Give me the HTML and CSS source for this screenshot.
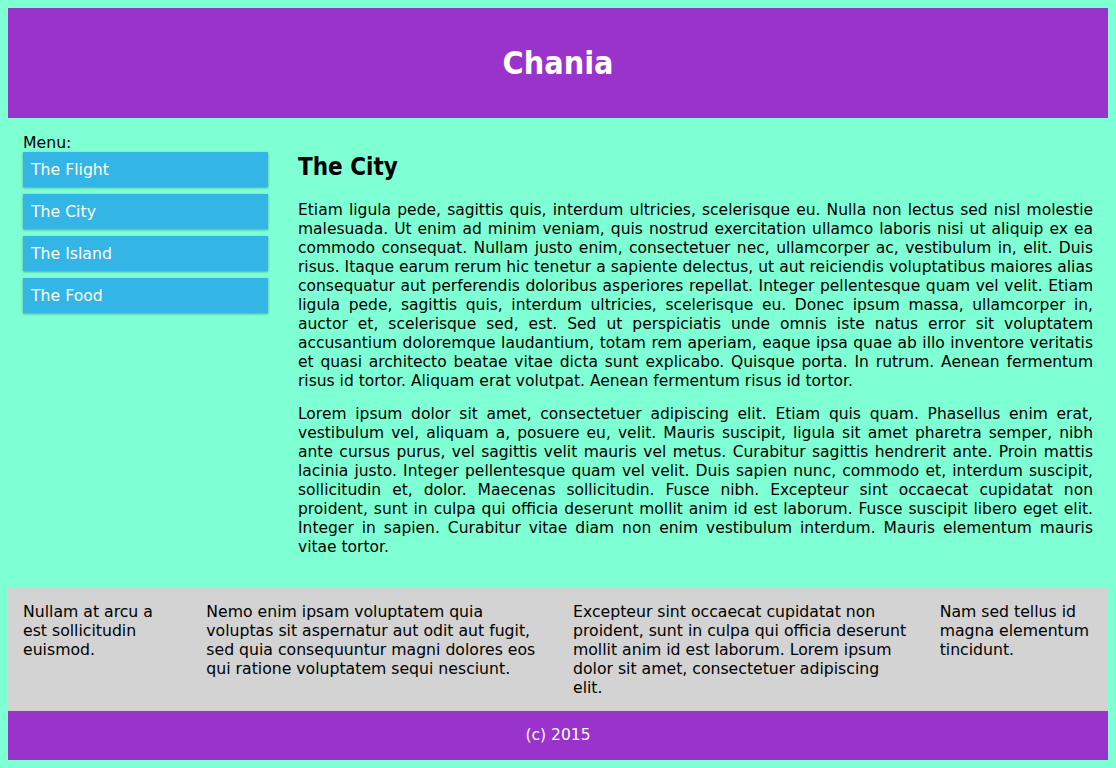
FILE: index.html
```html
<!DOCTYPE html>
<html>
<head>
<meta charset="utf-8">
<title>Chania</title>
<link rel="stylesheet" href="styles.css">
</head>
<body>
<div class="header">
  <h1>Chania</h1>
</div>

<div class="row">
  <div class="col menu">
    Menu:
    <ul>
      <li>The Flight</li>
      <li>The City</li>
      <li>The Island</li>
      <li>The Food</li>
    </ul>
  </div>
  <div class="col main">
    <h2>The City</h2>
    <p>Etiam ligula pede, sagittis quis, interdum ultricies, scelerisque eu. Nulla non lectus sed nisl molestie malesuada. Ut enim ad minim veniam, quis nostrud exercitation ullamco laboris nisi ut aliquip ex ea commodo consequat. Nullam justo enim, consectetuer nec, ullamcorper ac, vestibulum in, elit. Duis risus. Itaque earum rerum hic tenetur a sapiente delectus, ut aut reiciendis voluptatibus maiores alias consequatur aut perferendis doloribus asperiores repellat. Integer pellentesque quam vel velit. Etiam ligula pede, sagittis quis, interdum ultricies, scelerisque eu. Donec ipsum massa, ullamcorper in, auctor et, scelerisque sed, est. Sed ut perspiciatis unde omnis iste natus error sit voluptatem accusantium doloremque laudantium, totam rem aperiam, eaque ipsa quae ab illo inventore veritatis et quasi architecto beatae vitae dicta sunt explicabo. Quisque porta. In rutrum. Aenean fermentum risus id tortor. Aliquam erat volutpat. Aenean fermentum risus id tortor.</p>
    <p>Lorem ipsum dolor sit amet, consectetuer adipiscing elit. Etiam quis quam. Phasellus enim erat, vestibulum vel, aliquam a, posuere eu, velit. Mauris suscipit, ligula sit amet pharetra semper, nibh ante cursus purus, vel sagittis velit mauris vel metus. Curabitur sagittis hendrerit ante. Proin mattis lacinia justo. Integer pellentesque quam vel velit. Duis sapien nunc, commodo et, interdum suscipit, sollicitudin et, dolor. Maecenas sollicitudin. Fusce nibh. Excepteur sint occaecat cupidatat non proident, sunt in culpa qui officia deserunt mollit anim id est laborum. Fusce suscipit libero eget elit. Integer in sapien. Curabitur vitae diam non enim vestibulum interdum. Mauris elementum mauris vitae tortor.</p>
  </div>
</div>

<div class="row gray">
  <div class="col c1">Nullam at arcu a est sollicitudin euismod.</div>
  <div class="col c2">Nemo enim ipsam voluptatem quia voluptas sit aspernatur aut odit aut fugit, sed quia consequuntur magni dolores eos qui ratione voluptatem sequi nesciunt.</div>
  <div class="col c2">Excepteur sint occaecat cupidatat non proident, sunt in culpa qui officia deserunt mollit anim id est laborum. Lorem ipsum dolor sit amet, consectetuer adipiscing elit.</div>
  <div class="col c1">Nam sed tellus id magna elementum tincidunt.</div>
</div>

<div class="footer">(c) 2015</div>
</body>
</html>
```

FILE: styles.css
```css
* {
  box-sizing: border-box;
}

html {
  background-color: #7fffd4;
}

body {
  margin: 8px;
  font-family: "DejaVu Sans", sans-serif;
  font-size: 15.7px;
  line-height: 19px;
  color: #000;
}

.header {
  background-color: #9933cc;
  color: #ffffff;
  padding: 15px;
  text-align: center;
}

.header h1 {
  font-family: "DejaVu Sans Condensed", "DejaVu Sans", sans-serif;
  font-size: 32px;
  line-height: 37px;
  margin: 22px 0 21px;
}

.row {
  display: flex;
}

.col {
  padding: 15px;
}

.menu {
  width: 25%;
}

.main {
  width: 75%;
  padding-bottom: 16px;
}

.menu ul {
  list-style-type: none;
  margin: 0;
  padding: 0;
}

.menu li {
  padding: 8px;
  margin-bottom: 7px;
  background-color: #33b5e5;
  color: #ffffff;
  box-shadow: 0 1px 3px rgba(0, 0, 0, 0.12), 0 1px 2px rgba(0, 0, 0, 0.24);
}

.main h2 {
  font-family: "DejaVu Sans Condensed", "DejaVu Sans", sans-serif;
  font-size: 24px;
  line-height: 28px;
  margin: 20px 0 20px;
}

.main p {
  font-size: 15.5px;
  text-align: justify;
  margin: 14px 0;
}

.gray {
  background-color: #d3d3d3;
}

.gray .col {
  padding-bottom: 14px;
}

.c1 {
  width: 16.6667%;
}

.c2 {
  width: 33.3333%;
}

.footer {
  background-color: #9933cc;
  color: #ffffff;
  text-align: center;
  font-size: 15.5px;
  line-height: 19px;
  padding: 15px;
}
```
